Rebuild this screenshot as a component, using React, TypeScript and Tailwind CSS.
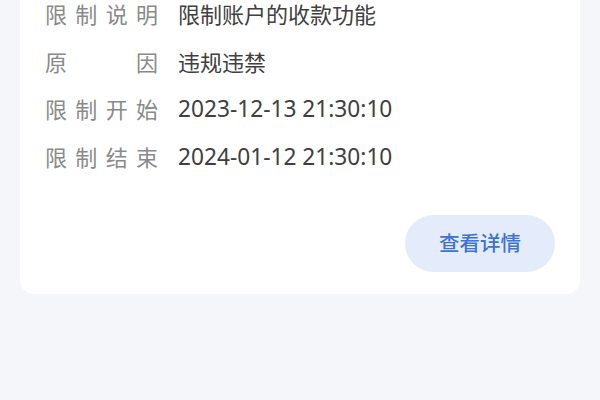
import React from 'react';

const rows: { label: string[]; value: string; cls: string }[] = [
    { label: ['限', '制', '说', '明'], value: '限制账户的收款功能', cls: 'text-[22px]' },
    { label: ['原', '因'], value: '违规违禁', cls: 'text-[22px]' },
    { label: ['限', '制', '开', '始'], value: '2023-12-13 21:30:10', cls: 'text-[22.7px]' },
    { label: ['限', '制', '结', '束'], value: '2024-01-12 21:30:10', cls: 'text-[22.7px]' },
];

const font = { fontFamily: '"Noto Sans", "Noto Sans CJK SC", sans-serif' };

const App: React.FC = () => {
    return (
        <div className="w-[600px] h-[400px] bg-[#f5f6fa] overflow-hidden" style={font}>
            <div className="mx-[20px] bg-white rounded-b-[14px] pl-[25px] pr-[25px] pb-[22px]">
                <div className="flex flex-col -mt-[10px]">
                    {rows.map((row, i) => (
                        <div key={i} className="flex items-center h-[47.7px] text-[22px] leading-[24px]">
                            <div className="w-[113px] flex justify-between text-[#8a8a8a]">
                                {row.label.map((c, j) => (
                                    <span key={j}>{c}</span>
                                ))}
                            </div>
                            <div className={`ml-[20px] text-[#404040] ${row.cls}`}>{row.value}</div>
                        </div>
                    ))}
                </div>
                <div className="flex justify-end mt-[34px]">
                    <button className="w-[150px] h-[57px] rounded-full bg-[#e4ecfc] text-[#3f73d0] text-[20.5px] font-medium">
                        查看详情
                    </button>
                </div>
            </div>
        </div>
    );
};

export default App;
